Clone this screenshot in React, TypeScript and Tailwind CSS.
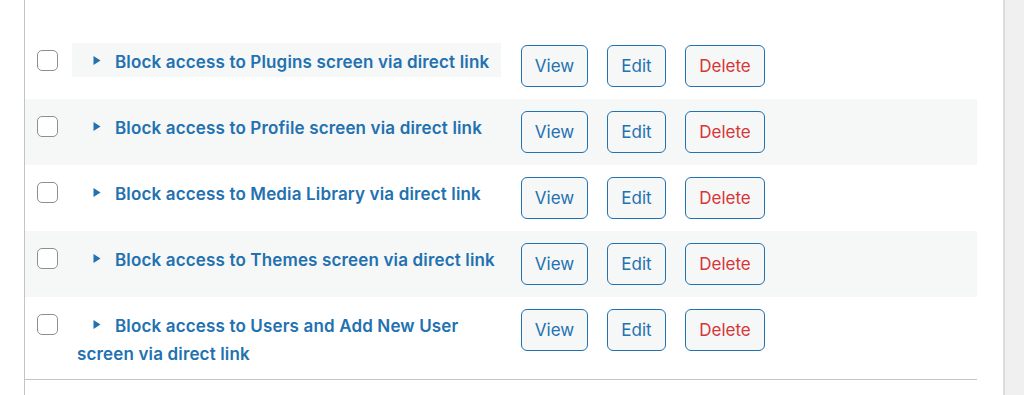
import React from "react";

const rules = [
  "Block access to Plugins screen via direct link",
  "Block access to Profile screen via direct link",
  "Block access to Media Library via direct link",
  "Block access to Themes screen via direct link",
  "Block access to Users and Add New User screen via direct link",
];

function Arrow() {
  return (
    <svg
      className="inline-block ml-[16px] mr-[14px] align-[3px]"
      width="8"
      height="9"
      viewBox="0 0 8 9"
    >
      <path d="M0.5 0 L7.5 4.5 L0.5 9 Z" fill="#2271b1" />
    </svg>
  );
}

function RuleRow({ title, index }: { title: string; index: number }) {
  const striped = index % 2 === 1;
  const active = index === 0;
  const btn =
    "h-[42px] pt-[2px] rounded-[6px] border border-[#2271b1] bg-[#f6f7f7] text-[17px]";
  return (
    <div
      className={`flex items-start ${striped ? "bg-[#f6f7f7]" : "bg-white"}`}
    >
      {/* checkbox */}
      <div className="w-[47px] shrink-0 pl-[12px] pt-[17px]">
        <div className="w-[21px] h-[21px] rounded-[5px] border border-[#8c8f94] bg-white" />
      </div>

      {/* title */}
      <div className="w-[429px] shrink-0 py-[10px]">
        <div
          className={`px-[5px] pt-[5px] pb-[1px] leading-[28px] text-[17px] tracking-[0.15px] font-semibold text-[#2271b1] ${
            active ? "bg-[#f6f7f7]" : ""
          }`}
        >
          <Arrow />
          {title}
        </div>
      </div>

      {/* actions */}
      <div className="flex gap-[19px] pl-[20px] py-[12px]">
        <button className={`${btn} w-[67px] text-[#2271b1]`}>View</button>
        <button className={`${btn} w-[59px] text-[#2271b1]`}>Edit</button>
        <button className={`${btn} w-[80px] text-[#d63638]`}>Delete</button>
      </div>
    </div>
  );
}

export default function App() {
  return (
    <div
      className="flex w-[1024px] h-[395px] bg-white overflow-hidden"
      style={{ fontFamily: "Inter, 'Noto Sans', sans-serif" }}
    >
      <div className="w-[24px] shrink-0" />
      <div className="flex-1 border-l border-[#c3c4c7] pt-[33px]">
        <div className="w-[952px] border-b border-[#c3c4c7]">
          {rules.map((r, i) => (
            <RuleRow key={r} title={r} index={i} />
          ))}
        </div>
      </div>
      <div className="w-[21px] shrink-0 border-l-2 border-[#dcdcde] bg-[#f0f0f1]" />
    </div>
  );
}
